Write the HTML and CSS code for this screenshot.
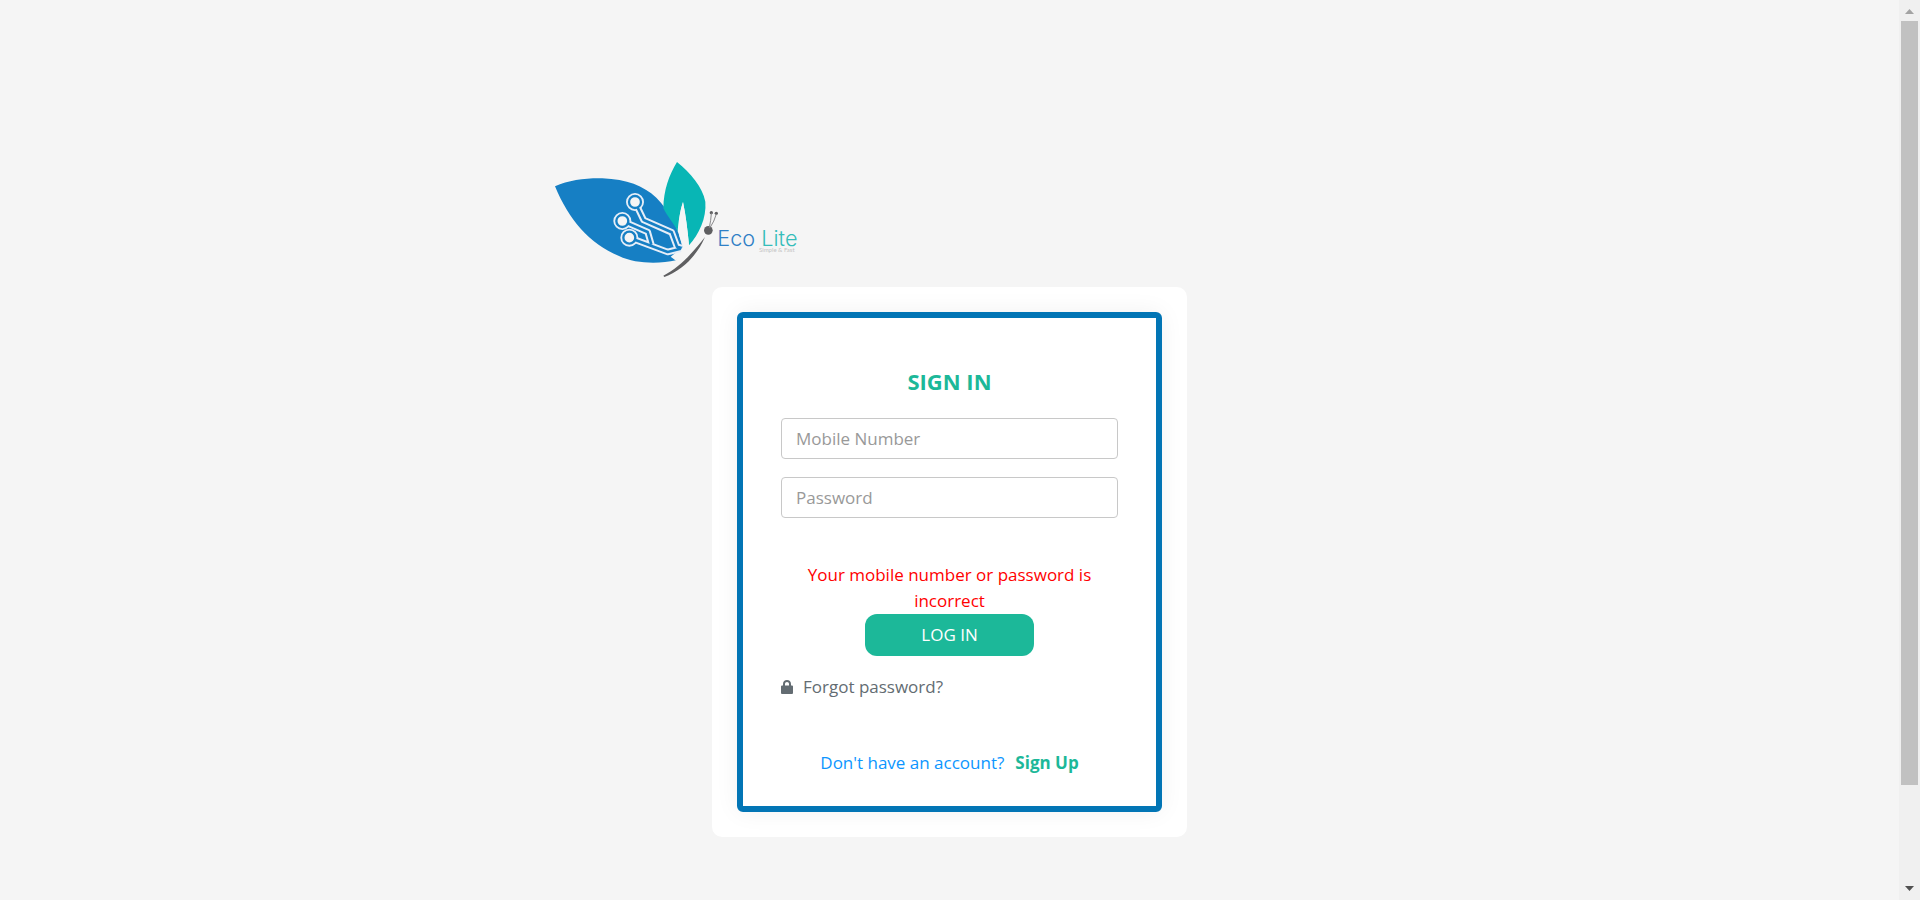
FILE: index.html
```html
<!DOCTYPE html>
<html lang="en">
<head>
<meta charset="utf-8">
<meta name="viewport" content="width=device-width, initial-scale=1">
<title>Eco Lite - Sign In</title>
<link rel="stylesheet" href="styles.css">
</head>
<body>
<div class="shell">
  <main class="page">
    <div class="container">
      <svg class="logo" viewBox="30 15 780 396" role="img" aria-label="Eco Lite, Simple &amp; Fast">
        <path fill="#167fc4" d="M48 109C90 90 140 84 190 85C265 88 312 107 352 143C392 183 420 240 431 292L411 331C360 342 290 342 240 318C150 280 90 210 48 109Z"/>
        <path fill="#08b6b5" d="M414 36C455 70 490 110 499 155C503 205 480 252 450 286C446 240 440 195 432 156C422 185 418 220 416 245C405 220 385 200 373 175C374 120 390 75 414 36Z"/>
        <path fill="#f5f5f5" d="M432 156C422 185 418 220 420 255L431 292L395 320L411 332L450 286C446 240 440 195 432 156Z"/>
        <g fill="none" stroke-linejoin="round">
          <g stroke="#e6eef8" stroke-width="20">
            <path d="M288 156L314 210L398 247L414 290L428 294M250 213L326 246L337 284M271 263L386 306L425 296"/>
            <circle cx="288" cy="156" r="17"/>
            <circle cx="250" cy="213" r="17"/>
            <circle cx="271" cy="263" r="17"/>
          </g>
          <path stroke="#167fc4" stroke-width="8" d="M288 156L314 210L398 247L414 290L428 294M250 213L326 246L337 284M271 263L386 306L425 296"/>
          <g fill="#f5f5f5" stroke="#167fc4" stroke-width="7">
            <circle cx="288" cy="156" r="18"/>
            <circle cx="250" cy="213" r="18"/>
            <circle cx="271" cy="263" r="18"/>
          </g>
        </g>
        <path fill="#5f5f61" d="M498 261C465 303 425 350 373 377L376 381C430 362 475 315 498 261Z"/>
        <g fill="#5f5f61">
          <circle cx="508" cy="241" r="13"/>
          <circle cx="517" cy="188" r="5"/>
          <circle cx="532" cy="190" r="5"/>
        </g>
        <path fill="none" stroke="#88888a" stroke-width="3" d="M511 233Q516 210 517 190M513 233Q526 214 532 192"/>
        <text class="logo-name" x="535" y="288" fill="#2f80c6">Eco</text>
        <text class="logo-name" x="667" y="288" fill="#35bdba">Lite</text>
        <text class="logo-tag" x="660" y="307">Simple &amp; Fast</text>
      </svg>
      <section class="card">
        <form class="frame">
          <h1 class="title">SIGN IN</h1>
          <div class="fields">
            <input class="field" type="tel" placeholder="Mobile Number" aria-label="Mobile Number">
            <input class="field" type="password" placeholder="Password" aria-label="Password">
          </div>
          <p class="error" role="alert">Your mobile number or password is incorrect</p>
          <button class="login" type="submit">LOG IN</button>
          <a class="forgot" href="#forgot">
            <svg class="lock" viewBox="0 0 12 14" aria-hidden="true"><path fill="currentColor" fill-rule="evenodd" d="M1 6V5.500H2V4C2 1.600 3.700 0 6 0S10 1.600 10 4V5.500H11Q12 5.500 12 6.500V13Q12 14 11 14H1Q0 14 0 13V6.500Q0 5.500 1 5.500ZM4 5.500H8V4C8 2.700 7.200 1.900 6 1.900S4 2.700 4 4Z"/></svg>
            <span>Forgot password?</span>
          </a>
          <p class="signup"><span>Don't have an account?</span><a class="signup-link" href="#signup">Sign Up</a></p>
        </form>
      </section>
    </div>
  </main>
  <div class="scrollbar" aria-hidden="true">
    <svg class="arrow" viewBox="0 0 9 5"><path fill="#a3a3a3" d="M4.500 0L9 5H0Z"/></svg>
    <div class="track"><div class="thumb"></div></div>
    <svg class="arrow" viewBox="0 0 9 5"><path fill="#505050" d="M0 0H9L4.500 5Z"/></svg>
  </div>
</div>
</body>
</html>
```
FILE: styles.css
```css
* { box-sizing: border-box; }

body {
  margin: 0;
  background: #f5f5f5;
  color: #636c72;
  font: 17px/26px "Segoe UI", "Open Sans", "Noto Sans", sans-serif;
}

.shell { display: flex; min-height: 100vh; }
.page { flex: 1; padding-top: 155px; }
.container { width: 42.2%; min-width: 475px; margin: 0 auto; }

.logo { display: block; width: 260px; height: 132px; }
.logo-name { font: 300 65px Inter, sans-serif; }
.logo-tag { font: 400 18px Lato, sans-serif; fill: #c4c4c4; }

.card {
  width: 475px;
  margin: 0 auto;
  padding: 25px;
  background: #fff;
  border-radius: 10px;
}

.frame {
  display: flex;
  flex-direction: column;
  padding: 47px 38px 30px;
  background: #fff;
  border: 6px solid #0275b5;
  border-radius: 6px;
  box-shadow: 0 0 24px rgba(0, 0, 0, 0.06);
}

.title {
  margin: 0 0 21px;
  color: #1cb899;
  font-size: 22px;
  line-height: 32px;
  font-weight: 700;
  text-align: center;
}

.fields { display: grid; gap: 18px; }

.field {
  width: 100%;
  height: 41px;
  padding: 0 14px;
  background: #fff;
  border: 1px solid #c8c8c8;
  border-radius: 4px;
  color: #464a4c;
  font: inherit;
}
.field::placeholder { color: #999; opacity: 1; }

.error { margin: 44px 0 0; color: #f00; text-align: center; }

.login {
  align-self: center;
  width: 50%;
  height: 42px;
  padding: 0;
  background: #1cb899;
  border: 0;
  border-radius: 12px;
  color: #fff;
  font: inherit;
}

.forgot {
  display: flex;
  align-items: center;
  align-self: flex-start;
  gap: 10px;
  margin-top: 18px;
  color: #636c72;
  text-decoration: none;
}
.lock { width: 12px; height: 14px; }

.signup {
  display: flex;
  justify-content: center;
  gap: 11px;
  margin: 50px 0 0;
  color: #0c96ff;
}
.signup-link { color: #1cb899; font-weight: 700; text-decoration: none; }

.scrollbar {
  display: flex;
  flex-direction: column;
  align-items: center;
  width: 21px;
  height: 100vh;
  padding: 9px 2px;
  background: #f0f0f0;
}
.arrow { width: 9px; height: 5px; }
.track { flex: 1; width: 17px; padding: 7px 0; }
.thumb { height: 89%; background: #c1c1c1; }
```
